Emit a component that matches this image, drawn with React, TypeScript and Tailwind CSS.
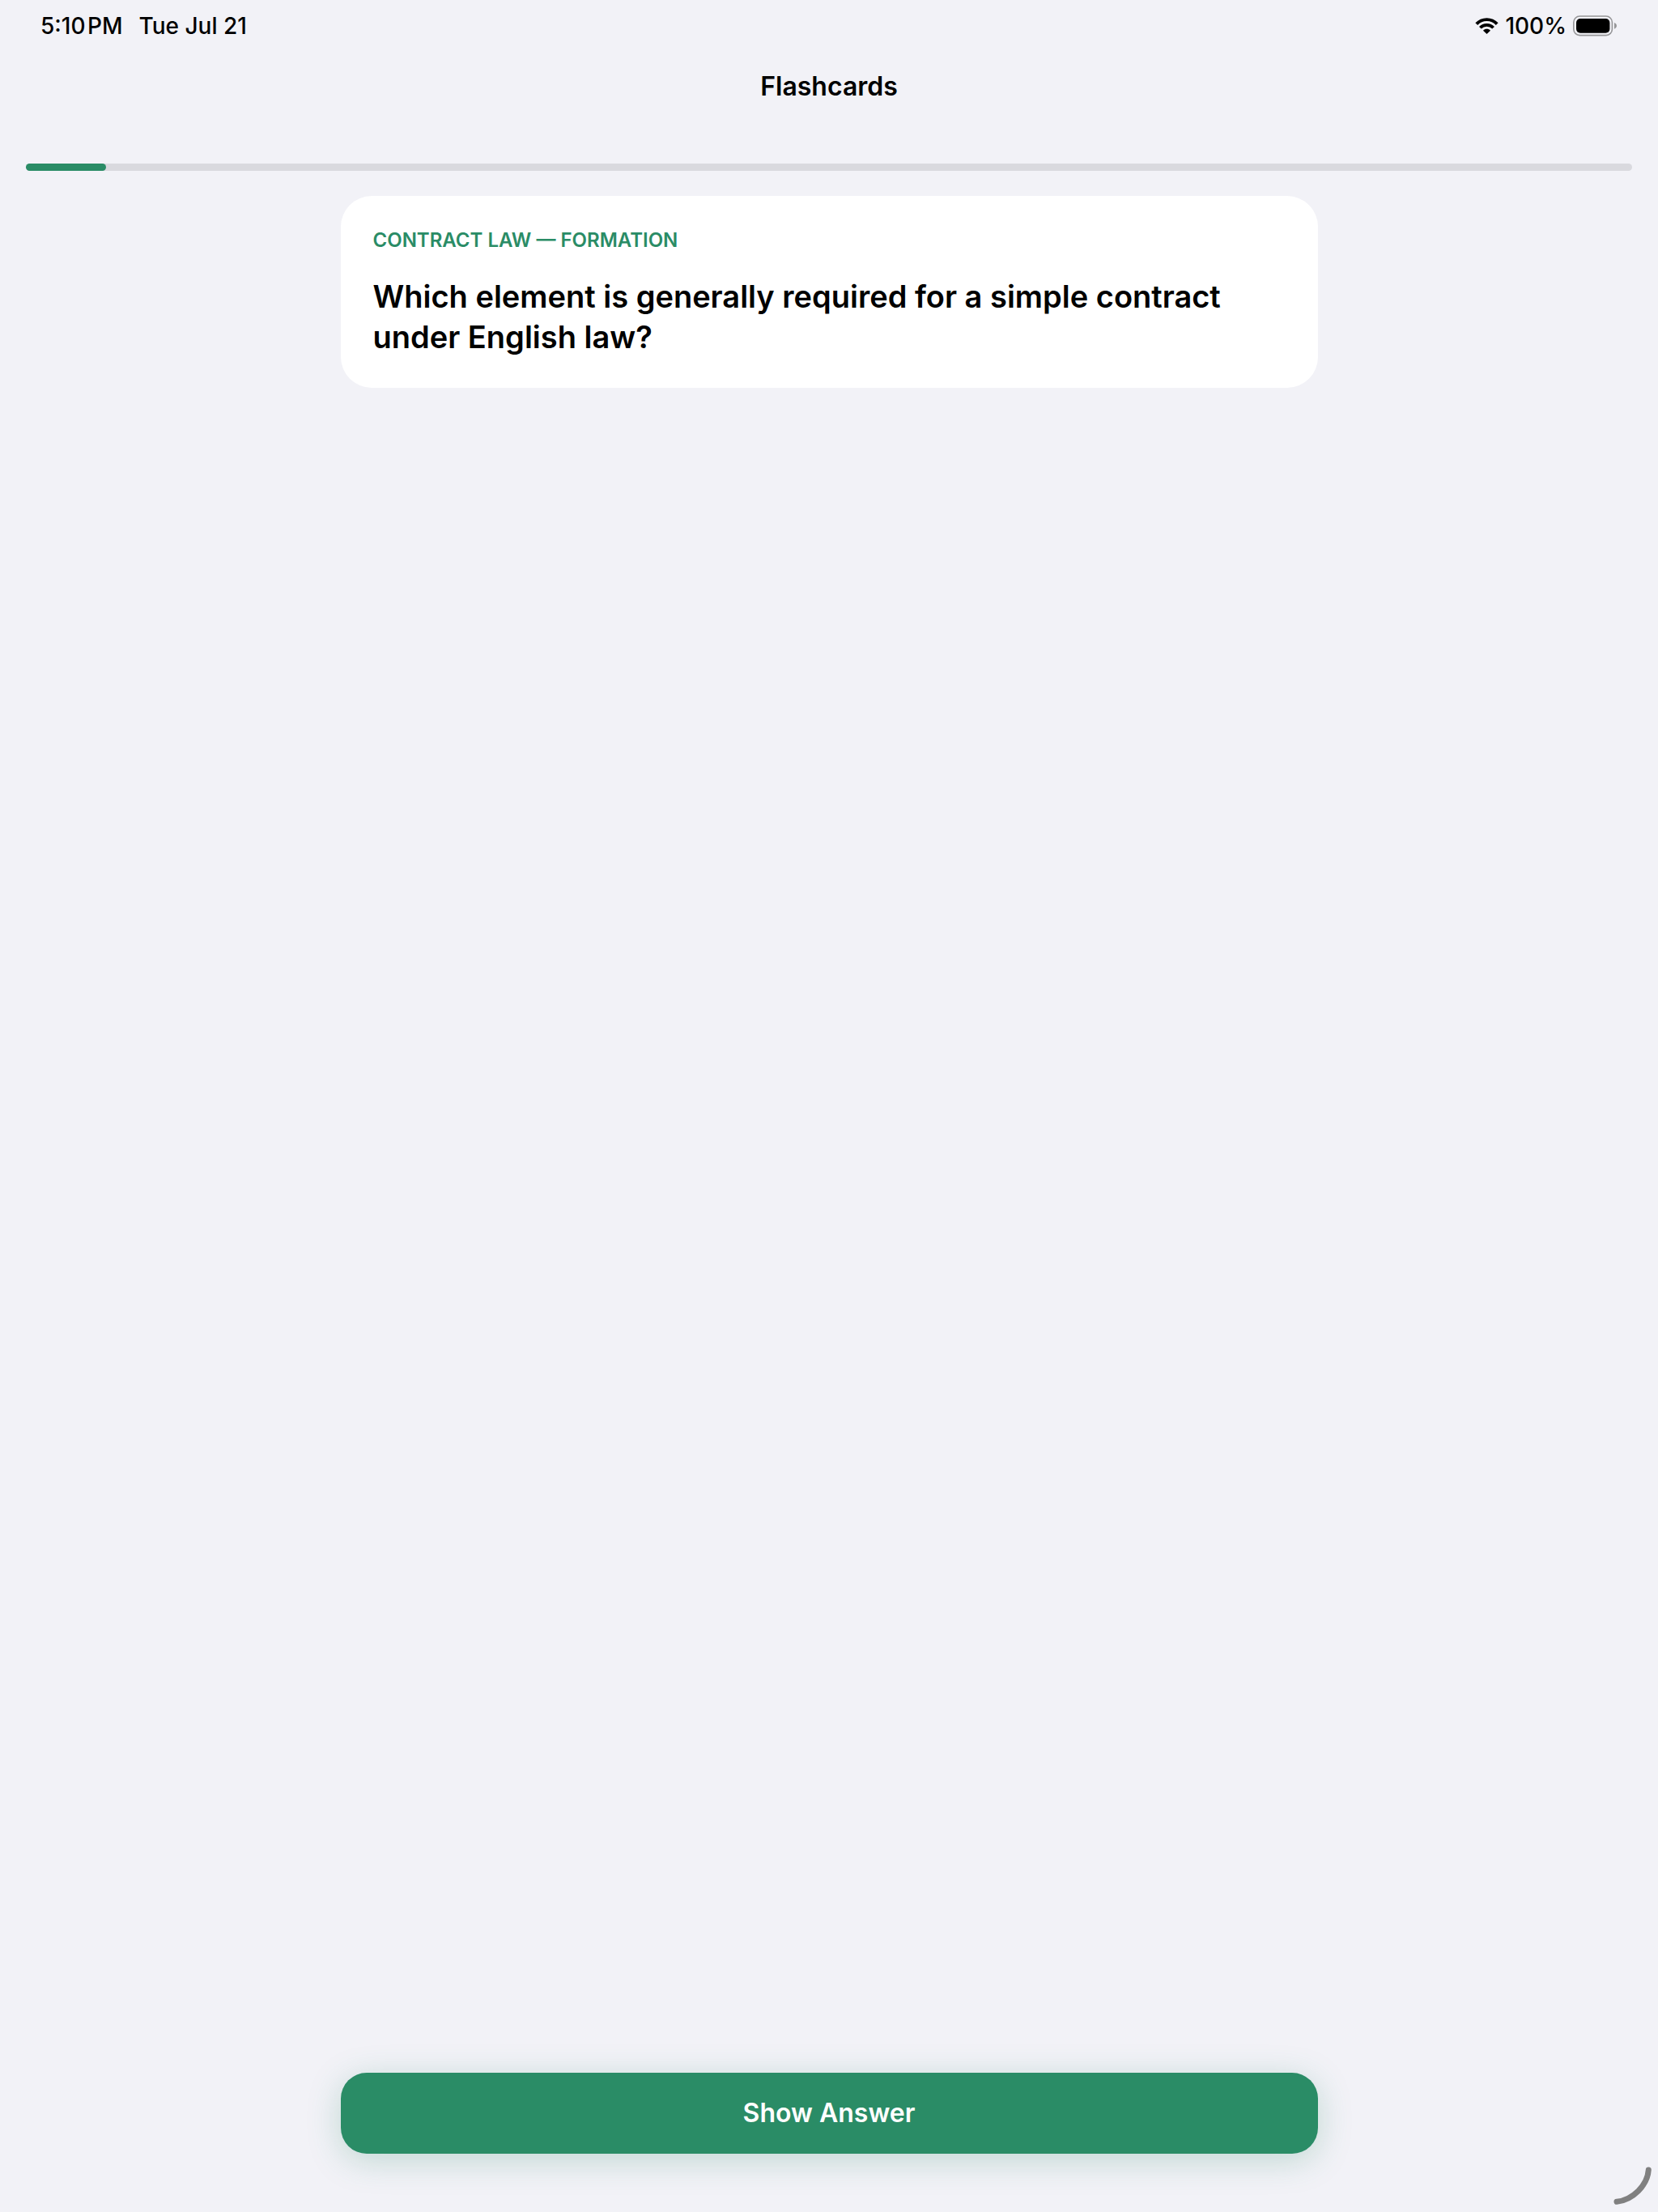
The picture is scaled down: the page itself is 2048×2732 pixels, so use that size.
import React, { useState } from 'react';

const card = {
  topic: 'Contract Law — Formation',
  question: 'Which element is generally required for a simple contract under English law?',
  answer: 'Consideration'
};

function WifiIcon() {
  return <svg width="29" height="20" viewBox="0 0 29 20" fill="none" aria-hidden="true">
      <path d="M1.8 7.6A17.5 17.5 0 0 1 27.2 7.6" stroke="black" strokeWidth="3.9" />
      <path d="M6.4 12.3A11.2 11.2 0 0 1 22.6 12.3" stroke="black" strokeWidth="3.8" />
      <path d="M14.5 20L10 15.8C12.4 13.2 16.6 13.2 19 15.8Z" fill="black" />
    </svg>;
}

function BatteryIcon() {
  return <svg width="55" height="26" viewBox="0 0 55 26" fill="none" aria-hidden="true">
      <rect x="0.8" y="1" width="47.6" height="23.6" rx="7.5" stroke="#969698" strokeWidth="1.6" />
      <rect x="4" y="4" width="41.4" height="17.8" rx="5" fill="black" />
      <path d="M51 9C52.8 9.8 54 11.2 54 12.8C54 14.4 52.8 15.9 51 16.7Z" fill="#969698" />
    </svg>;
}

function StatusBar() {
  return <div className="flex h-16 items-center justify-between px-[50px] text-[28px] leading-8 font-medium">
      <div className="flex gap-5">
        <span>5:10{'\u200A'}PM</span>
        <span>Tue Jul 21</span>
      </div>
      <div className="flex items-center gap-2">
        <WifiIcon />
        <span>100%</span>
        <BatteryIcon />
      </div>
    </div>;
}

interface ProgressBarProps {
  value: number;
}
function ProgressBar({
  value
}: ProgressBarProps) {
  return <div role="progressbar" aria-label="Progress" aria-valuenow={value} aria-valuemin={0} aria-valuemax={100} className="mx-8 h-[9px] rounded-full bg-[#d9d9de]">
      <div className="h-full rounded-full bg-[#2a8c66]" style={{
      width: `${value}%`
    }} />
    </div>;
}

export default function App() {
  const [showAnswer, setShowAnswer] = useState(false);
  return <div className="relative flex min-h-screen flex-col bg-[#f2f2f7] font-['Inter',sans-serif] text-black">
      <StatusBar />
      <header className="flex h-[138px] justify-center pt-[23px]">
        <h1 className="text-[32px] leading-10 font-semibold">Flashcards</h1>
      </header>
      <ProgressBar value={5} />
      <main className="mx-auto flex w-full max-w-[1207px] grow flex-col justify-between pt-[31px] pb-[72px]">
        <section className="rounded-[38px] bg-white px-10 pt-[41px] pb-[38px]">
          <p className="text-2xl leading-7 font-semibold text-[#2a8c66] uppercase">
            {card.topic}
          </p>
          <h2 className="mt-[30px] text-[38px] leading-[50px] font-semibold">
            {card.question}
          </h2>
          {showAnswer && <p className="mt-7 text-[32px] leading-10">{card.answer}</p>}
        </section>
        <button type="button" onClick={() => setShowAnswer(!showAnswer)} className="h-[100px] w-full rounded-[32px] bg-[#2a8c66] text-[32px] leading-10 font-semibold text-white shadow-[0_8px_40px_rgba(42,140,102,0.25)]">
          {showAnswer ? 'Hide Answer' : 'Show Answer'}
        </button>
      </main>
      {/* Corner handle */}
      <svg className="absolute right-2 bottom-2" width="48" height="48" viewBox="0 0 48 48" fill="none" aria-hidden="true">
        <path d="M44.3 4C43 23 25 41 5 43.3" stroke="#808080" strokeWidth="7" strokeLinecap="round" />
      </svg>
    </div>;
}
